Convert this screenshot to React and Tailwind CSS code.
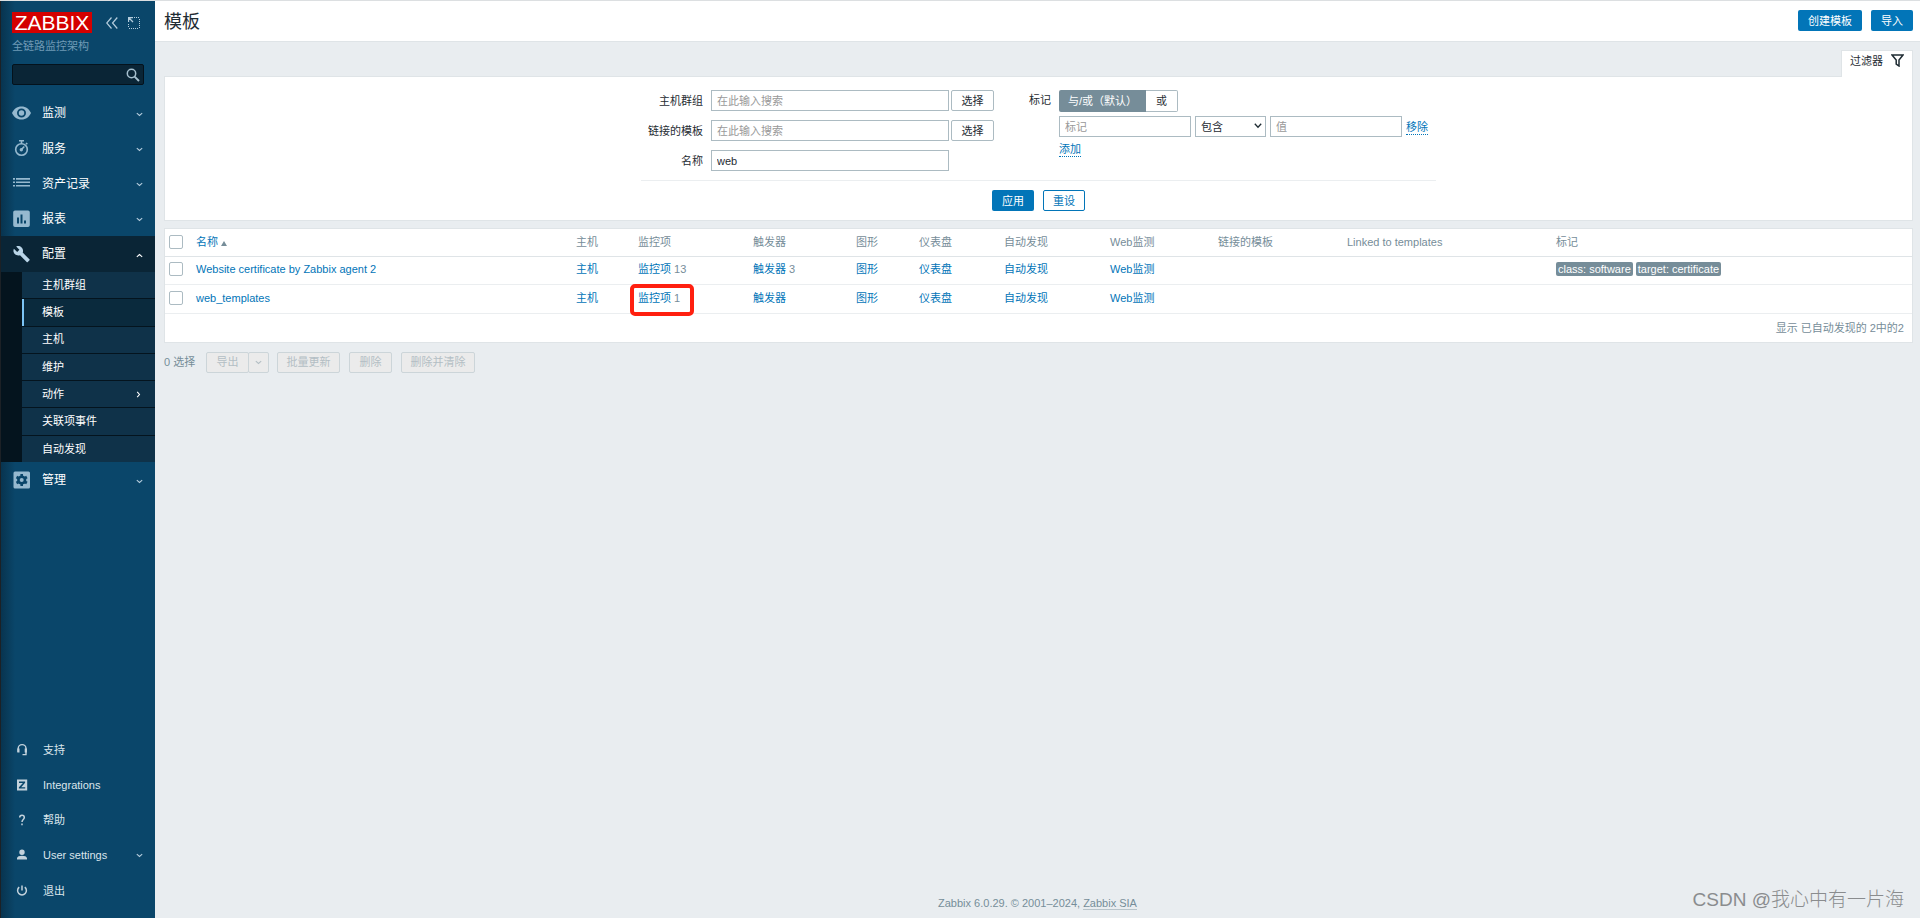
import React, { useState } from 'react';

const mainMenu = [
  { label: '监测', icon: 'eye' },
  { label: '服务', icon: 'watch' },
  { label: '资产记录', icon: 'list' },
  { label: '报表', icon: 'report' },
];

const configMenu = [
  { label: '主机群组' },
  { label: '模板', active: true },
  { label: '主机' },
  { label: '维护' },
  { label: '动作', more: true },
  { label: '关联项事件' },
  { label: '自动发现' },
];

const userMenu = [
  { label: '支持', icon: 'support' },
  { label: 'Integrations', icon: 'zabbix' },
  { label: '帮助', icon: 'help' },
  { label: 'User settings', icon: 'user', more: true },
  { label: '退出', icon: 'power' },
];

const templates = [
  { name: 'Website certificate by Zabbix agent 2', items: 13, triggers: 3, tags: ['class: software', 'target: certificate'] },
  { name: 'web_templates', items: 1, marked: true, tags: [] },
];

const headers = ['主机', '监控项', '触发器', '图形', '仪表盘', '自动发现', 'Web监测', '链接的模板', 'Linked to templates', '标记'];

const MenuIcon = ({ name }) => (
  <svg className="w-5 h-5 shrink-0" viewBox="0 0 20 20" fill="currentColor" aria-hidden="true">
    {name === 'eye' && (
      <path fillRule="evenodd" d="M9.5 3.5C5 3.5 1.6 6.2 0 10c1.600 3.800 5 6.500 9.500 6.500S17.400 13.800 19 10C17.400 6.200 14 3.500 9.500 3.500zm0 2a4.500 4.500 0 1 1 0 9 4.500 4.500 0 0 1 0-9zm0 1.800a2.700 2.700 0 1 0 0 5.400 2.700 2.700 0 0 0 0-5.400z" />
    )}
    {name === 'watch' && (
      <g fill="none" stroke="currentColor" strokeWidth="1.600">
        <circle cx="9.500" cy="10.500" r="5.800" />
        <path d="M7 1.800h5M9.500 2v3M14 4l1.300 1.300" />
        <path d="M9.500 10.500l2.800-3" />
        <circle cx="9.300" cy="10.700" r="0.900" fill="currentColor" />
      </g>
    )}
    {name === 'list' && (
      <path d="M1 4h2v1.700H1zM4 4h14v1.700H4zM1 7.400h2v1.700H1zM4 7.400h14v1.700H4zM1 10.900h2v1.700H1zM4 10.900h14v1.700H4z" />
    )}
    {name === 'report' && (
      <path fillRule="evenodd" d="M3 1.500h13a1.800 1.800 0 0 1 1.800 1.800v13A1.800 1.800 0 0 1 16 18H3a1.800 1.800 0 0 1-1.800-1.700v-13A1.800 1.800 0 0 1 3 1.500zM5 8.500v6h2v-6zM8.500 5.500v9h2v-9zM12 11.500v3h2v-3z" />
    )}
    {name === 'wrench' && (
      <path d="M17.400 15.300l-6.700-6.700c.7-1.700.3-3.700-1.100-5.100C8.100 2 5.900 1.700 4.200 2.500l3.200 3.200-2.200 2.200L1.900 4.700C1 6.500 1.400 8.600 2.900 10.100c1.400 1.400 3.400 1.800 5.100 1.100l6.700 6.700c.3.3.8.3 1.100 0l1.700-1.700c.3-.2.3-.7-.1-.9z" />
    )}
    {name === 'gear' && (
      <>
        <rect x="1.500" y="1.500" width="16.500" height="17" rx="1.500" />
        <g fill="#0a466a">
          <circle cx="9.700" cy="10" r="4.600" />
          <path d="M8.400 4h2.600v12H8.400z" />
          <path d="M8.400 4h2.600v12H8.400z" transform="rotate(60 9.700 10)" />
          <path d="M8.400 4h2.600v12H8.400z" transform="rotate(120 9.700 10)" />
        </g>
        <circle cx="9.700" cy="10" r="2" />
      </>
    )}
    {name === 'support' && (
      <g fill="none" stroke="currentColor" strokeWidth="1.400">
        <path d="M6.200 12V8.500a3.900 3.900 0 0 1 7.800 0V12" />
        <path d="M6.400 8.500v4M13.800 8.500v4" strokeWidth="2.200" />
        <path d="M14 12v2.600h-3.500" />
      </g>
    )}
    {name === 'zabbix' && (
      <path fillRule="evenodd" d="M5 4.500h10.200v11H5zM7 6.500v1.400h3.900L6.900 12.300v1.300h6.300v-1.400H9.200l3.900-4.400V6.500z" />
    )}
    {name === 'help' && (
      <g fill="none" stroke="currentColor" strokeWidth="1.500">
        <path d="M7.700 7.500c0-1.400 1-2.300 2.300-2.300s2.300.9 2.300 2.200c0 2-2.300 2.200-2.300 4.600" />
        <path d="M10 13.500v1.700" />
      </g>
    )}
    {name === 'user' && (
      <path d="M10 4.500a2.700 2.700 0 1 1 0 5.400 2.700 2.700 0 0 1 0-5.400zM5 14.500v-1.200c0-1.700 2.500-2.500 5-2.500s5 .8 5 2.500v1.200z" />
    )}
    {name === 'power' && (
      <g fill="none" stroke="currentColor" strokeWidth="1.500">
        <path d="M7.200 6.200a4.400 4.400 0 1 0 5.600 0" />
        <path d="M10 4.500v5" />
      </g>
    )}
  </svg>
);

const Chevron = ({ className }) => (
  <svg className={className} width="7" height="7" viewBox="0 0 7 7" fill="none" stroke="currentColor" strokeWidth="1.100" aria-hidden="true">
    <path d="M0.800 2.200l2.700 2.300 2.700-2.300" />
  </svg>
);

const Sidebar = () => (
  <aside className="w-[155px] shrink-0 flex flex-col bg-[#0a466a] bg-linear-to-r from-[#08344f] to-[#0a466a] to-[14px] text-white border-l border-[#1c2126]">
    <div className="pl-[11px] pr-[11px] pt-[11px]">
      <div className="flex items-center">
        <a href="#home" className="w-20 h-[21px] bg-[#d40000] text-[21px] leading-[21px] text-center">ZABBIX</a>
        <button type="button" aria-label="Collapse sidebar" className="ml-[14px] text-[#b5cddd]">
          <svg width="12" height="12" viewBox="0 0 12 12" fill="none" stroke="currentColor" strokeWidth="1.200">
            <path d="M5.500 0.500L0.700 6l4.800 5.500M11.300 0.500L6.500 6l4.800 5.500" />
          </svg>
        </button>
        <button type="button" aria-label="Hide sidebar" className="ml-[10px] text-[#b5cddd]">
          <svg width="12" height="12" viewBox="0 0 12 12" fill="none" stroke="currentColor">
            <path d="M6 0.500h6M11.500 2v10M10 11.500H0M0.500 10V6" strokeDasharray="1 1" />
            <path d="M0.500 5V0.500H5M0.800 0.800l4.200 4.200" strokeWidth="1.300" />
          </svg>
        </button>
      </div>
      <div className="mt-[5px] h-4 leading-4 text-[#6f9ab5]">全链路监控架构</div>
      <form className="mt-[10px] h-[21px] flex items-center bg-[#0a2536] border border-[#04121c] rounded-xs">
        <input type="search" aria-label="Search" className="flex-1 min-w-0 px-1 bg-transparent outline-none" />
        <button type="button" aria-label="Search" className="pr-[3px] text-[#a6c0cf]">
          <svg width="14" height="14" viewBox="0 0 14 14" fill="none" stroke="currentColor">
            <circle cx="5.500" cy="5.500" r="4.200" strokeWidth="1.500" />
            <path d="M8.600 8.600l4.400 4.400" strokeWidth="1.900" />
          </svg>
        </button>
      </form>
    </div>

    <nav className="mt-[10px] text-xs">
      {mainMenu.map((item) => (
        <a key={item.label} href={`#${item.icon}`} className="h-[35px] first:h-9 pl-[11px] pr-3 flex items-center">
          <span className="text-[#96b9cf]"><MenuIcon name={item.icon} /></span>
          <span className="ml-[10px] flex-1">{item.label}</span>
          <Chevron className="text-[#b5cddd] mt-[2px]" />
        </a>
      ))}

      {/* Configuration, expanded */}
      <a href="#config" className="h-9 pl-[11px] pr-3 flex items-center bg-[#0a2536]">
        <span className="text-[#b9d5e8]"><MenuIcon name="wrench" /></span>
        <span className="ml-[10px] flex-1">配置</span>
        <Chevron className="rotate-180 mt-[2px]" />
      </a>
      <ul className="h-[190px] flex flex-col pl-[21px] bg-[#04141e] text-[11px]">
        {configMenu.map((item) => (
          <li key={item.label} className="flex-1 flex border-b border-[#04141e] last:border-b-0">
            <a
              href={`#${item.label}`}
              className={`flex-1 pr-[13px] flex items-center ${
                item.active ? 'bg-[#0a2a3d] border-l-2 border-[#7cc4f5] pl-[18px]' : 'bg-[#0f3249] pl-5'
              }`}
            >
              <span className="flex-1">{item.label}</span>
              {item.more && <Chevron className="-rotate-90" />}
            </a>
          </li>
        ))}
      </ul>
      <a href="#admin" className="h-9 pl-[11px] pr-3 flex items-center">
        <span className="text-[#96b9cf]"><MenuIcon name="gear" /></span>
        <span className="ml-[10px] flex-1">管理</span>
        <Chevron className="text-[#b5cddd] mt-[2px]" />
      </a>
    </nav>

    <nav className="mt-auto pb-[10px] text-[#dbe5ec]">
      {userMenu.map((item) => (
        <a key={item.label} href={`#${item.icon}`} className={`${item.more ? 'h-9' : 'h-[35px]'} pl-[11px] pr-3 flex items-center`}>
          <span className="text-[#c3d2dc]"><MenuIcon name={item.icon} /></span>
          <span className="ml-[11px] flex-1">{item.label}</span>
          {item.more && <Chevron className="text-[#b5cddd]" />}
        </a>
      ))}
    </nav>
  </aside>
);

const inputClass = 'h-[21px] px-[5px] border border-[#acbbc2] bg-white text-[#1f2c33] placeholder:text-[#999999] outline-none';
const plainButton = 'w-[43px] h-[21px] border border-[#acbbc2] rounded-xs bg-white';
const linkClass = 'text-[#0275b8]';

const Filter = () => {
  const [name, setName] = useState('web');

  return (
    <section>
      <div className="flex justify-end">
        <button type="button" className="h-[27px] w-[72px] -mb-px pb-[7px] flex items-center justify-center gap-2 bg-white border border-b-0 border-[#dfe4e7] z-10 whitespace-nowrap">
          过滤器
          <svg width="13" height="13" viewBox="0 0 13 13" fill="none" stroke="#1f2c33" strokeWidth="1.500" aria-hidden="true">
            <path d="M1 1h11L8 6v6L5.200 10V6z" />
          </svg>
        </button>
      </div>
      <form className="bg-white border border-[#dfe4e7] pt-[13px] pb-[9px]" onSubmit={(e) => e.preventDefault()}>
        <div className="w-[795px] mx-auto">
          <div className="flex h-[90px] items-start">
            <div className="flex flex-col gap-[9px]">
              <div className="flex items-center">
                <label htmlFor="groups" className="w-[62px] mr-2 text-right">主机群组</label>
                <input id="groups" placeholder="在此输入搜索" className={`${inputClass} w-[238px]`} />
                <button type="button" className={`${plainButton} ml-[2px]`}>选择</button>
              </div>
              <div className="flex items-center">
                <label htmlFor="linked" className="w-[62px] mr-2 text-right">链接的模板</label>
                <input id="linked" placeholder="在此输入搜索" className={`${inputClass} w-[238px]`} />
                <button type="button" className={`${plainButton} ml-[2px]`}>选择</button>
              </div>
              <div className="flex items-center">
                <label htmlFor="name" className="w-[62px] mr-2 text-right">名称</label>
                <input id="name" value={name} onChange={(e) => setName(e.target.value)} className={`${inputClass} w-[238px]`} />
              </div>
            </div>

            <div className="ml-[35px] mr-2 leading-[21px]">标记</div>
            <div>
              <div className="flex h-[22px]">
                <button type="button" className="w-[87px] bg-[#768d99] text-white rounded-l-xs">与/或（默认）</button>
                <button type="button" className="w-8 border border-l-0 border-[#acbbc2] rounded-r-xs">或</button>
              </div>
              <div className="mt-1 flex items-center gap-1">
                <input aria-label="标记" placeholder="标记" className={`${inputClass} w-[132px]`} />
                <span className="relative">
                  <select aria-label="运算符" className={`${inputClass} w-[71px] appearance-none block`}>
                    <option>包含</option>
                  </select>
                  <svg className="absolute right-1 top-[7px] pointer-events-none" width="8" height="6" viewBox="0 0 8 6" fill="none" stroke="#1f2c33" strokeWidth="1.300">
                    <path d="M0.800 0.800L4 4.300 7.200 0.800" />
                  </svg>
                </span>
                <input aria-label="值" placeholder="值" className={`${inputClass} w-[132px]`} />
                <button type="button" className={`${linkClass} h-4 leading-4 border-b border-dotted border-[#0275b8]`}>移除</button>
              </div>
              <button type="button" className={`${linkClass} mt-1 h-4 leading-4 block border-b border-dotted border-[#0275b8]`}>添加</button>
            </div>
          </div>
          <div className="border-t border-[#ebeef0] pt-[9px] flex justify-center gap-[9px]">
            <button type="submit" className="w-[42px] h-[21px] bg-[#0275b8] text-white rounded-xs">应用</button>
            <button type="button" className="w-[42px] h-[21px] border border-[#0275b8] text-[#0275b8] rounded-xs">重设</button>
          </div>
        </div>
      </form>
    </section>
  );
};

const Checkbox = ({ label }) => (
  <input type="checkbox" aria-label={label} className="block w-[14px] h-[14px] ml-1 appearance-none bg-white border border-[#acbbc2] rounded-xs" />
);

const cell = 'px-[5px] pb-[2px]';

const TemplateTable = () => (
  <div className="mt-[7px] bg-white border border-[#dfe4e7]">
    <table className="w-full table-fixed text-left border-collapse">
      <colgroup>
        <col className="w-[26px]" />
        <col className="w-[380px]" />
        <col className="w-[62px]" />
        <col className="w-[115px]" />
        <col className="w-[103px]" />
        <col className="w-[63px]" />
        <col className="w-[85px]" />
        <col className="w-[106px]" />
        <col className="w-[108px]" />
        <col className="w-[129px]" />
        <col className="w-[209px]" />
        <col className="w-[361px]" />
      </colgroup>
      <thead>
        <tr className="h-[27px] border-b border-[#dfe4e7] text-[#768d99]">
          <th><Checkbox label="全选" /></th>
          <th className="px-[5px] font-normal">
            <a href="#sort" className={`${linkClass} inline-flex items-center gap-[3px]`}>
              名称
              <svg width="6" height="5" viewBox="0 0 6 5" fill="#768d99" className="mt-[3px]"><path d="M3 0l3 5H0z" /></svg>
            </a>
          </th>
          {headers.map((title) => (
            <th key={title} className="px-[5px] font-normal">{title}</th>
          ))}
        </tr>
      </thead>
      <tbody>
        {templates.map((row) => (
          <tr key={row.name} className="h-[29px] first:h-7 border-b border-[#ebeef0] text-[#768d99]">
            <td className="pb-[2px]"><Checkbox label={row.name} /></td>
            <td className={cell}><a href="#template" className={linkClass}>{row.name}</a></td>
            <td className={cell}><a href="#hosts" className={linkClass}>主机</a></td>
            <td className={`${cell} relative`}>
              <a href="#items" className={linkClass}>监控项</a> {row.items}
              {row.marked && <span className="absolute -left-[3px] -top-px w-16 h-8 border-4 border-[#ff2010] rounded-[5px] pointer-events-none" />}
            </td>
            <td className={cell}><a href="#triggers" className={linkClass}>触发器</a> {row.triggers}</td>
            <td className={cell}><a href="#graphs" className={linkClass}>图形</a></td>
            <td className={cell}><a href="#dashboards" className={linkClass}>仪表盘</a></td>
            <td className={cell}><a href="#discovery" className={linkClass}>自动发现</a></td>
            <td className={cell}><a href="#web" className={linkClass}>Web监测</a></td>
            <td />
            <td />
            <td className={cell}>
              <div className="flex gap-[3px]">
                {row.tags.map((tag) => (
                  <span key={tag} className="h-[14px] leading-[14px] px-[2px] bg-[#768d99] text-white rounded-xs">{tag}</span>
                ))}
              </div>
            </td>
          </tr>
        ))}
      </tbody>
    </table>
    <div className="h-7 leading-7 pr-2 text-right text-[#768d99]">显示 已自动发现的 2中的2</div>
  </div>
);

const disabledButton = 'h-[21px] border border-[#ccd5d9] bg-[#ebebeb] text-[#b3bec4] rounded-xs';

const App = () => (
  <div className="relative min-h-screen flex border-t border-[#dcdfe1] bg-[#e9edf0] text-[11px] leading-4 text-[#1f2c33] font-['Liberation_Sans','Noto_Sans_CJK_SC',sans-serif]">
    <Sidebar />
    <main className="flex-1 min-w-0 flex flex-col">
      <header className="h-[41px] pl-[9px] pr-[7px] pt-[9px] flex items-start gap-[9px] bg-white border-b border-[#dfe4e7]">
        <h1 className="flex-1 text-lg leading-6">模板</h1>
        <button type="button" className="w-16 h-[21px] bg-[#0275b8] text-white rounded-xs">创建模板</button>
        <button type="button" className="w-[42px] h-[21px] bg-[#0275b8] text-white rounded-xs">导入</button>
      </header>

      <div className="pl-[9px] pr-[7px] pt-2">
        <Filter />
        <TemplateTable />
        <div className="mt-[9px] flex items-center text-[#768d99]">
          <span className="w-[42px]">0 选择</span>
          <button type="button" disabled className={`${disabledButton} w-[43px]`}>导出</button>
          <button type="button" disabled aria-label="导出格式" className={`${disabledButton} w-[21px] -ml-px flex items-center justify-center`}>
            <Chevron />
          </button>
          <button type="button" disabled className={`${disabledButton} w-[63px] ml-2`}>批量更新</button>
          <button type="button" disabled className={`${disabledButton} w-[43px] ml-[9px]`}>删除</button>
          <button type="button" disabled className={`${disabledButton} w-[74px] ml-[9px]`}>删除并清除</button>
        </div>
      </div>

      <footer className="mt-auto pb-[7px] text-center text-[#768d99]">
        Zabbix 6.0.29. © 2001–2024, <a href="#sia" className="border-b border-[#b8c4ca]">Zabbix SIA</a>
      </footer>
    </main>
    <div className="absolute right-4 bottom-1 text-[19px] leading-7 font-light text-[#8a8c8e] pointer-events-none">CSDN @我心中有一片海</div>
  </div>
);

export default App;
